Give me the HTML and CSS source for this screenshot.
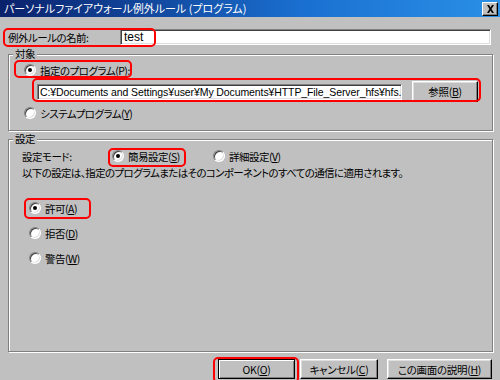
FILE: index.html
```html
<!DOCTYPE html>
<html lang="ja">
<head>
  <meta charset="UTF-8">
  <title>パーソナルファイアウォール例外ルール (プログラム)</title>
  <link rel="stylesheet" href="styles.css">
</head>
<body>
  <div class="window">
    <div class="titlebar">
      <span class="title">パーソナルファイアウォール例外ルール (プログラム)</span>
      <span class="close">
        <svg width="9" height="8" viewBox="0 0 9 8"><path d="M1 0h2l1.5 2.5L6 0h2L5.5 4 8 8H6L4.5 5.5 3 8H1l2.5-4z" fill="#000"/></svg>
      </span>
    </div>

    <div class="name-row">
      <span class="label">例外ルールの名前:</span>
      <div class="field name-field">test</div>
    </div>

    <div class="group target">
      <span class="legend">対象</span>
      <div class="option first">
        <span class="radio checked"></span>指定のプログラム(<u>P</u>):
      </div>
      <div class="path-row">
        <div class="field path-field">C:¥Documents and Settings¥user¥My Documents¥HTTP_File_Server_hfs¥hfs.</div>
        <button class="btn browse">参照(<u>B</u>)</button>
      </div>
      <div class="option">
        <span class="radio"></span>システムプログラム(<u>Y</u>)
      </div>
    </div>

    <div class="group settings">
      <span class="legend">設定</span>
      <div class="mode-row">
        <span class="mode-label">設定モード:</span>
        <span class="option inline simple"><span class="radio checked"></span>簡易設定(<u>S</u>)</span>
        <span class="option inline"><span class="radio"></span>詳細設定(<u>V</u>)</span>
      </div>
      <p class="note">以下の設定は、指定のプログラムまたはそのコンポーネントのすべての通信に適用されます。</p>
      <div class="actions">
        <div class="option"><span class="radio checked"></span>許可(<u>A</u>)</div>
        <div class="option"><span class="radio"></span>拒否(<u>D</u>)</div>
        <div class="option"><span class="radio"></span>警告(<u>W</u>)</div>
      </div>
    </div>

    <div class="buttons">
      <button class="btn default ok">OK(<u>O</u>)</button>
      <button class="btn cancel">キャンセル(<u>C</u>)</button>
      <button class="btn help">この画面の説明(<u>H</u>)</button>
    </div>

    <!-- red annotation boxes -->
    <div class="mark mark-name"></div>
    <div class="mark mark-prog"></div>
    <div class="mark mark-path"></div>
    <div class="mark mark-simple"></div>
    <div class="mark mark-allow"></div>
    <div class="mark mark-ok"></div>
  </div>
</body>
</html>
```

FILE: styles.css
```css
body {
  margin: 0;
  background: #c0c0c0;
  font-family: "Noto Sans CJK JP", "Liberation Sans", sans-serif;
  font-size: 10.5px;
  letter-spacing: -0.5px;
  font-feature-settings: "palt";
  color: #000;
}

.window {
  position: relative;
  width: 500px;
  height: 380px;
  overflow: hidden;
  background: #c0c0c0;
}

u {
  text-decoration: underline;
  text-underline-offset: 1px;
}

/* title bar */
.titlebar {
  height: 17px;
  display: flex;
  align-items: center;
  justify-content: space-between;
  padding: 0 2px 0 4px;
  background: linear-gradient(to right, #0a216b, #1a6fd0 60%, #2a90e6);
  color: #fff;
}

.title {
  font-size: 11px;
  letter-spacing: 0;
  line-height: 17px;
}

.close {
  width: 14px;
  height: 12px;
  display: flex;
  align-items: center;
  justify-content: center;
  background: #c0c0c0;
  border: 1px solid;
  border-color: #fff #000 #000 #fff;
  box-shadow: inset -1px -1px 0 #808080;
}

/* fields */
.field {
  box-sizing: border-box;
  background: #fff;
  border: 1px solid;
  border-color: #808080 #fff #fff #808080;
  box-shadow: inset 1px 1px 0 #404040, inset -1px -1px 0 #dfdfdf;
  padding: 0 3px;
  white-space: nowrap;
  overflow: hidden;
}

.name-row {
  display: flex;
  align-items: center;
  margin: 12px 0 0 8px;
  height: 16px;
}

.label {
  width: 112px;
}

.name-field {
  width: 371px;
  height: 16px;
  line-height: 14px;
  font-family: "Liberation Sans", sans-serif;
  font-size: 12px;
  letter-spacing: 0;
}

/* group boxes */
.group {
  position: relative;
  box-sizing: border-box;
  margin-left: 8px;
  width: 485px;
  border: 1px solid #808080;
  box-shadow: inset 1px 1px 0 #fff, 1px 1px 0 #fff;
}

.legend {
  position: absolute;
  top: -8px;
  left: 4px;
  padding: 0 2px;
  background: #c0c0c0;
  line-height: 14px;
}

.target {
  margin-top: 9px;
  height: 77px;
  padding: 9px 0 0 15px;
}

.settings {
  margin-top: 8px;
  height: 213px;
  padding: 8px 0 0 13px;
}

/* radio options */
.option {
  display: flex;
  align-items: center;
  height: 12px;
  white-space: nowrap;
}

.option.inline {
  display: inline-flex;
}

.radio {
  position: relative;
  box-sizing: border-box;
  width: 12px;
  height: 12px;
  margin-right: 4px;
  border-radius: 50%;
  background: #fff;
  border: 1px solid;
  border-color: #808080 #fff #fff #808080;
  box-shadow: inset 1px 1px 0 #404040, inset -1px -1px 0 #dfdfdf;
  flex: none;
}

.radio.checked::after {
  content: "";
  position: absolute;
  left: 3px;
  top: 3px;
  width: 4px;
  height: 4px;
  border-radius: 50%;
  background: #000;
}

.path-row {
  display: flex;
  align-items: center;
  margin: 5px 0 5px 13px;
  height: 21px;
}

.path-field {
  width: 365px;
  height: 16px;
  line-height: 14px;
  padding-left: 2px;
  font-family: "Liberation Sans", sans-serif;
  font-size: 10.5px;
  letter-spacing: -0.1px;
}

/* buttons */
.btn {
  box-sizing: border-box;
  height: 20px;
  padding: 0;
  font-family: inherit;
  font-size: 10.5px;
  letter-spacing: -0.3px;
  font-feature-settings: "palt";
  background: #c0c0c0;
  color: #000;
  border: 1px solid;
  border-color: #fff #000 #000 #fff;
  box-shadow: inset -1px -1px 0 #808080, inset 1px 1px 0 #dfdfdf;
}

.browse {
  width: 66px;
  height: 21px;
  margin-left: 10px;
}

.mode-row {
  display: flex;
  align-items: center;
  height: 16px;
}

.mode-label {
  width: 90px;
}

.simple {
  width: 101px;
}

.note {
  margin: 2px 0 0;
  line-height: 14px;
  letter-spacing: -0.65px;
}

.actions {
  display: flex;
  flex-direction: column;
  gap: 13px;
  margin: 22px 0 0 7px;
}

.buttons {
  display: flex;
  justify-content: flex-end;
  gap: 5px;
  margin: 7px 8px 0 0;
}

.ok {
  width: 77px;
}

.cancel {
  width: 78px;
}

.help {
  width: 105px;
  margin-left: 4px;
}

.default {
  border-color: #000;
  box-shadow: inset 1px 1px 0 #fff, inset -1px -1px 0 #808080;
}

/* red annotation boxes */
.mark {
  position: absolute;
  box-sizing: border-box;
  border: 2px solid #f00;
  border-radius: 5px;
}

.mark-name   { left: 3px;   top: 28px;  width: 153px; height: 19px; }
.mark-prog   { left: 14px;  top: 60px;  width: 118px; height: 18px; }
.mark-path   { left: 32px;  top: 78px;  width: 449px; height: 24px; }
.mark-simple { left: 108px; top: 148px; width: 78px;  height: 19px; }
.mark-allow  { left: 24px;  top: 198px; width: 67px;  height: 21px; }
.mark-ok     { left: 213px; top: 357px; width: 86px;  height: 26px; }
```
